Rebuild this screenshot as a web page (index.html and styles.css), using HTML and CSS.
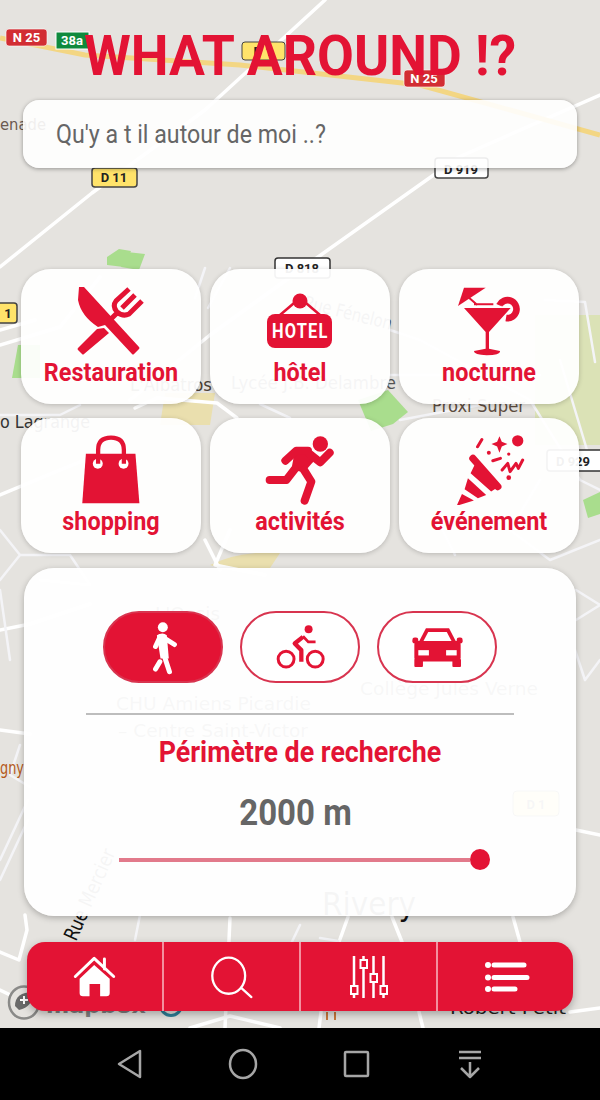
FILE: index.html
```html
<!DOCTYPE html>
<html lang="fr">
<head>
<meta charset="utf-8">
<title>What Around</title>
<link rel="stylesheet" href="styles.css">
</head>
<body>
<div class="screen">
  <svg class="map" viewBox="0 0 600 1028" width="600" height="1028">
    <rect width="600" height="1028" fill="#e5e3df"/>
    <g fill="#a9dd8d">
      <path d="M107 257l12-8 12 2-7 16-17-2zM127 252l18 2-6 16-18-3z"/>
      <path d="M18 345h22v33H12z"/>
      <path d="M358 400l30-10 20 22-15 12-22 7z"/>
      <path d="M583 500l17-8v22l-12 4z"/>
    </g>
    <path d="M535 315h65v130h-65z" fill="#dbe2b6"/>
    <path d="M165 393h50l-5 32h-50z" fill="#eadfae"/>
    <path d="M210 565q30-15 70-12l-10 15h-50z" fill="#eadfae"/>
    <g fill="none" stroke="#fff" stroke-linecap="round" stroke-linejoin="round">
      <g stroke-width="3.500">
        <path d="M325 0L205 110 92 193 0 267"/>
        <path d="M600 95L459 157 318 257 210 335 130 400"/>
        <path d="M0 330l35-10M0 345l60-18 40-50"/>
        <path d="M0 495l60-25 50-20"/>
        <path d="M0 630l30-6 60-20M0 730l30 4"/>
        <path d="M576 830l24 5"/>
        <path d="M225 1028l5-110M339 942l9-25M402 942l-10-25M520 942l-7-25"/>
        <path d="M0 952l19 8 8-30-2-15M0 990l25 12"/>
        <path d="M570 1012l30-4M321 1012l-2 16M419 1012l4 16M280 1028l-50-12-40 12"/>
        <path d="M205 540l15 30M230 530l-15 35 50 10"/>
        <path d="M135 408l22-10 60 5 20 15"/>
      </g>
      <g stroke-width="2.500" stroke="#f4f4f7">
        <path d="M205 268l-10 30M230 268l-22 40M390 330l30 10 110 60 50 80 20 10"/>
        <path d="M390 375h150M545 300l40 2 10 60M560 360l30 100"/>
        <path d="M540 480l-30 50 40 30 50-20"/>
        <path d="M0 415h60l20-10M20 555h50l20 30-50-5"/>
        <path d="M400 420l80-15M440 525l15 30M260 404l30 14"/>
        <path d="M0 590l10 70M576 620l24-15M576 590l24 15M585 680l-10-30M600 660l-15 20"/>
        <path d="M20 745l-10 30 20 12M0 860l28-60M0 880l28-60"/>
        <path d="M0 530l20 25-20 25"/>
        <path d="M300 925l-12 25h-12M320 938l18 3M140 915l-5 25"/>
      </g>
    </g>
    <path d="M0 38l85 17 155 10 180 20 180 50" fill="none" stroke="#f3d683" stroke-width="5"/>
    <g font-family="Roboto, sans-serif" font-weight="700" font-size="13" text-anchor="middle">
      <rect x="6" y="29" width="41" height="17" rx="3" fill="#d22d33" stroke="#fff" stroke-opacity=".6"/>
      <text x="26.500" y="42" fill="#fff">N 25</text>
      <rect x="56" y="32" width="33" height="17" fill="#0f8a3d" stroke="#fff"/>
      <text x="72" y="45" fill="#fff">38a</text>
      <rect x="242" y="42" width="43" height="18" rx="3" fill="#ffe36a" stroke="#444"/>
      <text x="263" y="56" fill="#222">D 1</text>
      <rect x="404" y="70" width="41" height="17" rx="3" fill="#d22d33" stroke="#fff" stroke-opacity=".6"/>
      <text x="424" y="83" fill="#fff">N 25</text>
      <rect x="92" y="168" width="45" height="19" rx="3" fill="#ffe36a" stroke="#444" stroke-width="1.500"/>
      <text x="114" y="182" fill="#222">D 11</text>
      <rect x="435" y="158" width="53" height="20" rx="3" fill="#fff" stroke="#444" stroke-width="1.500"/>
      <text x="461" y="174" fill="#222">D 919</text>
      <rect x="275" y="258" width="55" height="20" rx="3" fill="#fff" stroke="#333" stroke-width="1.500"/>
      <text x="302" y="273" fill="#222">D 818</text>
      <rect x="-20" y="303" width="37" height="20" rx="3" fill="#ffe36a" stroke="#444" stroke-width="1.500"/>
      <text x="8" y="318" fill="#222">1</text>
      <rect x="547" y="450" width="60" height="21" rx="3" fill="#fff" stroke="#333" stroke-width="1.500"/>
      <text x="573" y="466" fill="#222">D 929</text>
      <rect x="513" y="791" width="46" height="25" rx="4" fill="#ffe36a" stroke="#444"/>
      <text x="536" y="809" fill="#222">D 1</text>
    </g>
    <g font-family="'DejaVu Sans Condensed', Roboto, sans-serif" font-size="18" fill="#333">
      <text x="0" y="130" font-size="15" textLength="46" lengthAdjust="spacingAndGlyphs" fill="#6b5a50">enade</text>
      <text x="130" y="391" textLength="82" lengthAdjust="spacingAndGlyphs" fill="#4a4036">L'Albatros</text>
      <text x="231" y="389" textLength="165" lengthAdjust="spacingAndGlyphs" fill="#555">Lycée J.B. Delambre</text>
      <text x="0" y="428" textLength="90" lengthAdjust="spacingAndGlyphs">o Lagrange</text>
      <text x="432" y="412" textLength="93" lengthAdjust="spacingAndGlyphs" fill="#5c4c40">Proxi Super</text>
      <text x="303" y="308" textLength="90" lengthAdjust="spacingAndGlyphs" transform="rotate(14 303 308)" fill="#555">Rue Fénelon</text>
      <text x="155" y="620" textLength="65" lengthAdjust="spacingAndGlyphs">L'Oasis</text>
      <text x="116" y="710" textLength="195" lengthAdjust="spacingAndGlyphs">CHU Amiens Picardie</text>
      <text x="118" y="737" textLength="190" lengthAdjust="spacingAndGlyphs">– Centre Saint-Victor</text>
      <text x="360" y="695" textLength="178" lengthAdjust="spacingAndGlyphs">Collège Jules Verne</text>
      <text x="0" y="774" textLength="24" lengthAdjust="spacingAndGlyphs" fill="#b4591a">gny</text>
      <text x="322" y="915" font-size="32" textLength="94" lengthAdjust="spacingAndGlyphs" fill="#111">Rivery</text>
      <text x="76" y="942" font-size="20" textLength="98" lengthAdjust="spacingAndGlyphs" transform="rotate(-66 76 942)" fill="#111">Rue Mercier</text>
      <text x="450" y="1014" font-size="17" textLength="116" lengthAdjust="spacingAndGlyphs" fill="#222">Robert Petit</text>
      <text x="46" y="1013" font-size="18" font-weight="700" textLength="100" lengthAdjust="spacingAndGlyphs" fill="#808080">mapbox</text>
    </g>
    <g fill="none">
      <ellipse cx="24" cy="1002.500" rx="15" ry="16" fill="#e5e3df" stroke="#8a8a88" stroke-width="2.500"/>
      <path d="M15 1006q0-14 18-14 0 15-14 18z" fill="#6a6a6a"/>
      <path d="M24 996v8M20 1000h8" stroke="#fff" stroke-width="2"/>
      <circle cx="171" cy="1005" r="10.500" stroke="#2d7f97" stroke-width="3"/>
      <path d="M327 1012v8M335 1012v8" stroke="#c7763a" stroke-width="2"/>
    </g>
  </svg>

  <main class="ui">
    <h1 class="title"><span class="tall">WHAT AROUND !?</span></h1>
    <div class="search"><span class="tall">Qu'y a t il autour de moi ..?</span></div>

    <section class="grid">
      <a class="card">
        <svg class="ic" width="70" height="70" viewBox="0 0 70 70">
          <path d="M3 1h5l55 60q1 1 0 2l-5 5q-1 1-2 0L29 39l-7 2Q5 30 2 14z" fill="#e31334"/>
          <path d="M21 43l7-1 5 5L8 68q-1 1-2 0l-4-4q-1-1 0-2z" fill="#e31334"/>
          <path d="M53 3L40 15q-4 5 1 11 6 5 12 2L66 15M59 9L46 22M41 27l-8 8" fill="none" stroke="#e31334" stroke-width="5"/>
        </svg>
        <span class="label tall">Restauration</span>
      </a>
      <a class="card">
        <svg class="ic" width="76" height="70" viewBox="262 286 76 70">
          <circle cx="300" cy="301" r="7.500" fill="#e31334"/>
          <path d="M280 315l20-17 20 17" fill="none" stroke="#e31334" stroke-width="2.500"/>
          <rect x="267" y="314" width="65" height="34" rx="8" fill="#e31334"/>
          <text transform="translate(272 338) scale(.8 1)" font-family="Roboto, sans-serif" font-weight="700" font-size="20.500" letter-spacing="1.500" fill="#fff">HOTEL</text>
        </svg>
        <span class="label tall">hôtel</span>
      </a>
      <a class="card">
        <svg class="ic" width="70" height="70" viewBox="460 75 210 210">
          <path d="M490 80h65l-83 55z" fill="#e31334"/>
          <path d="M505 110l25 22M520 130h58" fill="none" stroke="#e31334" stroke-width="6"/>
          <path d="M490 141h140l-65 72v50l33 7q3 12-40 13-40-1-38-13l35-7v-50z" fill="#e31334"/>
          <path d="M596 133a27 27 0 1 1 20 38" fill="none" stroke="#e31334" stroke-width="20"/>
          <path d="M498 136h125" stroke="#fff" stroke-width="2"/>
        </svg>
        <span class="label tall">nocturne</span>
      </a>
      <a class="card">
        <svg class="ic" width="64" height="70" viewBox="240 525 188 212">
          <path d="M258 582h150l12 150H247z" fill="#e31334"/>
          <circle cx="294" cy="612" r="15" fill="#fff"/>
          <circle cx="372" cy="612" r="15" fill="#fff"/>
          <path d="M295 612v-42q0-37 39-37t39 37v42" fill="none" stroke="#e31334" stroke-width="13"/>
        </svg>
        <span class="label tall">shopping</span>
      </a>
      <a class="card">
        <svg class="ic" width="75" height="70" viewBox="25 15 225 210">
          <circle cx="197" cy="42" r="23" fill="#e31334"/>
          <path d="M122 55h42l12 40-28 32-38-8z" fill="#e31334"/>
          <path d="M92 92l33-30h35M165 72l32 25 28-29M148 120l22 35-20 57M120 118l-25 32H45" fill="none" stroke="#e31334" stroke-width="24" stroke-linecap="round" stroke-linejoin="round"/>
        </svg>
        <span class="label tall">activités</span>
      </a>
      <a class="card">
        <svg class="ic" width="73" height="70" viewBox="35 15 220 210">
          <path d="M46 228l16-36 36 20zM70 178l40 27 25-10-55-50zM88 130l62 55 20-13-70-67z" fill="#e31334"/>
          <path d="M95 85l75 85" fill="none" stroke="#e31334" stroke-width="22" stroke-linecap="round"/>
          <circle cx="230" cy="32" r="17" fill="#e31334"/>
          <path d="M175 18l7 17 17 7-17 7-7 19-7-19-17-7 17-7z" fill="#e31334"/>
          <circle cx="143" cy="68" r="6" fill="#e31334"/>
          <circle cx="203" cy="72" r="5" fill="#e31334"/>
          <circle cx="203" cy="143" r="7" fill="#e31334"/>
          <path d="M122 28l-13 22M155 92l23-7M183 120l17-20 7 25 18-25 7 15 13-25" fill="none" stroke="#e31334" stroke-width="9" stroke-linecap="round" stroke-linejoin="round"/>
        </svg>
        <span class="label tall">événement</span>
      </a>
    </section>

    <section class="panel">
      <div class="modes">
        <button class="mode active" type="button">
          <svg width="37" height="58" viewBox="40 20 110 175">
            <circle cx="93" cy="48" r="15" fill="#fff"/>
            <path d="M90 76l38 24M85 76l-14 30M96 130l17 52M84 152l-13 22" fill="none" stroke="#fff" stroke-width="15" stroke-linecap="round"/>
            <path d="M75 72q18-10 30 0l6 70H86z" fill="#fff"/>
          </svg>
        </button>
        <button class="mode" type="button">
          <svg width="55" height="48" viewBox="425 38 165 145">
            <circle cx="532" cy="57" r="12" fill="#e31334"/>
            <circle cx="464" cy="147" r="24" fill="none" stroke="#e31334" stroke-width="9"/>
            <circle cx="552" cy="147" r="24" fill="none" stroke="#e31334" stroke-width="9"/>
            <path d="M515 80l-25 20 20 20v35" fill="none" stroke="#e31334" stroke-width="13" stroke-linejoin="round"/>
            <path d="M515 78l16 17h22" fill="none" stroke="#e31334" stroke-width="8"/>
          </svg>
        </button>
        <button class="mode" type="button">
          <svg width="53" height="43" viewBox="840 45 160 130">
            <path d="M885 52h70l22 42h-114z" fill="#e31334"/>
            <path d="M892 63h56l16 30H876z" fill="#fff"/>
            <rect x="850" y="90" width="140" height="62" rx="12" fill="#e31334"/>
            <rect x="844" y="80" width="18" height="18" rx="7" fill="#e31334"/>
            <rect x="978" y="80" width="18" height="18" rx="7" fill="#e31334"/>
            <rect x="850" y="145" width="26" height="24" rx="3" fill="#e31334"/>
            <rect x="965" y="145" width="26" height="24" rx="3" fill="#e31334"/>
            <rect x="862" y="118" width="32" height="16" fill="#fff"/>
            <rect x="946" y="118" width="32" height="16" fill="#fff"/>
          </svg>
        </button>
      </div>
      <hr class="rule">
      <h2 class="perimeter"><span class="tall">Périmètre de recherche</span></h2>
      <div class="distance"><span class="tall">2000 m</span></div>
      <div class="slider"><div class="track"></div><div class="thumb"></div></div>
    </section>

    <nav class="nav">
      <a class="tab">
        <svg width="47" height="43" viewBox="35 30 140 130">
          <path d="M47 95l57-55 59 55M135 42v30" fill="none" stroke="#fff" stroke-width="9" stroke-linecap="round" stroke-linejoin="round"/>
          <path d="M104 60l47 42v43q0 10-10 10h-19v-37H90v37H70q-10 0-10-10v-43z" fill="#fff"/>
        </svg>
      </a>
      <a class="tab">
        <svg width="46" height="45" viewBox="445 25 140 135">
          <ellipse cx="505" cy="90" rx="50" ry="55" fill="none" stroke="#fff" stroke-width="7"/>
          <path d="M543 127l31 28" fill="none" stroke="#fff" stroke-width="7" stroke-linecap="round"/>
        </svg>
      </a>
      <a class="tab">
        <svg width="46" height="48" viewBox="346 952 46 48">
          <path d="M354 955v42M363.500 955v42M373.500 955v42M383.500 955v42" stroke="#fff" stroke-width="2.500"/>
          <g fill="#e31334" stroke="#fff" stroke-width="2">
            <rect x="351" y="985" width="6.500" height="8"/>
            <rect x="360.500" y="959" width="6.500" height="8"/>
            <rect x="370.500" y="973" width="6.500" height="8"/>
            <rect x="380.500" y="985" width="6.500" height="8"/>
          </g>
        </svg>
      </a>
      <a class="tab">
        <svg width="50" height="36" viewBox="480 958 50 36">
          <path d="M493 964h30M493 976.500h33M493 988h21" stroke="#fff" stroke-width="5" stroke-linecap="round"/>
          <circle cx="487" cy="964" r="3" fill="#fff"/>
          <circle cx="487" cy="976.500" r="3" fill="#fff"/>
          <circle cx="487" cy="988" r="3" fill="#fff"/>
        </svg>
      </a>
    </nav>
  </main>

  <footer class="android">
    <svg width="600" height="72" viewBox="0 1028 600 72">
      <g fill="none" stroke="#a6a6a6" stroke-width="2.500" stroke-linejoin="round">
        <path d="M140 1051v26l-21-13z"/>
        <ellipse cx="243" cy="1064" rx="13" ry="14"/>
        <rect x="345" y="1052" width="23" height="24" rx="1"/>
        <path d="M459 1052h22M459 1058h22M470 1062v14M461 1068l9 9 9-9"/>
      </g>
    </svg>
  </footer>
</div>
</body>
</html>
```
FILE: styles.css
```css
* { box-sizing: border-box; }
html, body { margin: 0; padding: 0; background: #000; }
body { font-family: Roboto, "Liberation Sans", sans-serif; }

.screen { position: relative; width: 600px; height: 1100px; overflow: hidden; background: #000; }
.map { position: absolute; top: 0; left: 0; display: block; }

.ui { position: relative; height: 1028px; display: flex; flex-direction: column; }
.tall { display: inline-block; transform: scaleY(1.1); }

.title {
  margin: 0; height: 100px; padding-top: 28px; text-align: center;
  font-size: 53.500px; line-height: 56px; font-weight: 700; color: #e31334;
  white-space: nowrap;
}
.title .tall { transform: scaleY(1.05); }

.search {
  margin: 0 23px; height: 68px; padding: 0 33px; display: flex; align-items: center;
  border-radius: 16px; background: rgba(255, 255, 255, .9);
  box-shadow: 0 1px 4px rgba(0, 0, 0, .35);
  font-size: 23.200px; color: #666;
}

.grid {
  margin: 101px 21px 0; display: grid;
  grid-template-columns: repeat(3, 180px); grid-auto-rows: 135px; column-gap: 9px; row-gap: 14px;
}
.card {
  display: flex; flex-direction: column; align-items: center; justify-content: flex-start;
  padding-top: 17px; border-radius: 30px; background: rgba(255, 255, 255, .94);
  box-shadow: 0 1px 5px rgba(0, 0, 0, .2);
}
.ic { display: block; }
.label { margin-top: 2px; font-size: 23.400px; line-height: 28px; font-weight: 700; color: #e31334; }

.panel {
  margin: 15px 24px 0; height: 348px; padding-top: 43px;
  display: flex; flex-direction: column; align-items: center;
  border-radius: 30px; background: rgba(255, 255, 255, .96);
  box-shadow: 0 2px 6px rgba(0, 0, 0, .25);
}
.modes { display: flex; gap: 17px; }
.mode {
  width: 120px; height: 72px; padding: 0; display: flex; align-items: center; justify-content: center;
  border: 2px solid #d8344f; border-radius: 36px; background: #fff;
}
.mode.active { background: #e31334; }
.rule { width: 428px; height: 2px; margin: 30px 0 0; border: 0; background: #bdbdbd; }
.perimeter {
  margin: 20px 0 0; font-size: 26.800px; line-height: 34px; font-weight: 700; color: #e31334;
}
.distance { margin: 24px 9px 0 0; font-size: 33px; line-height: 40px; font-weight: 700; color: #666; }
.slider { width: 371px; margin: 16px 0 0 8px; display: flex; align-items: center; }
.track { flex: 1; height: 4px; background: #e27a8b; }
.thumb { width: 20px; height: 21px; border-radius: 50%; background: #e31334; }

.nav {
  margin: 26px 27px 0; height: 69px; display: flex;
  border-radius: 18px; background: #e31334; overflow: hidden;
  box-shadow: 0 3px 8px rgba(0, 0, 0, .3);
}
.tab {
  flex: 1; display: flex; align-items: center; justify-content: center;
  border-left: 2px solid #f3909f;
}
.tab:first-child { border-left: 0; }

.android { height: 72px; background: #000; }
.android svg { display: block; }
```
